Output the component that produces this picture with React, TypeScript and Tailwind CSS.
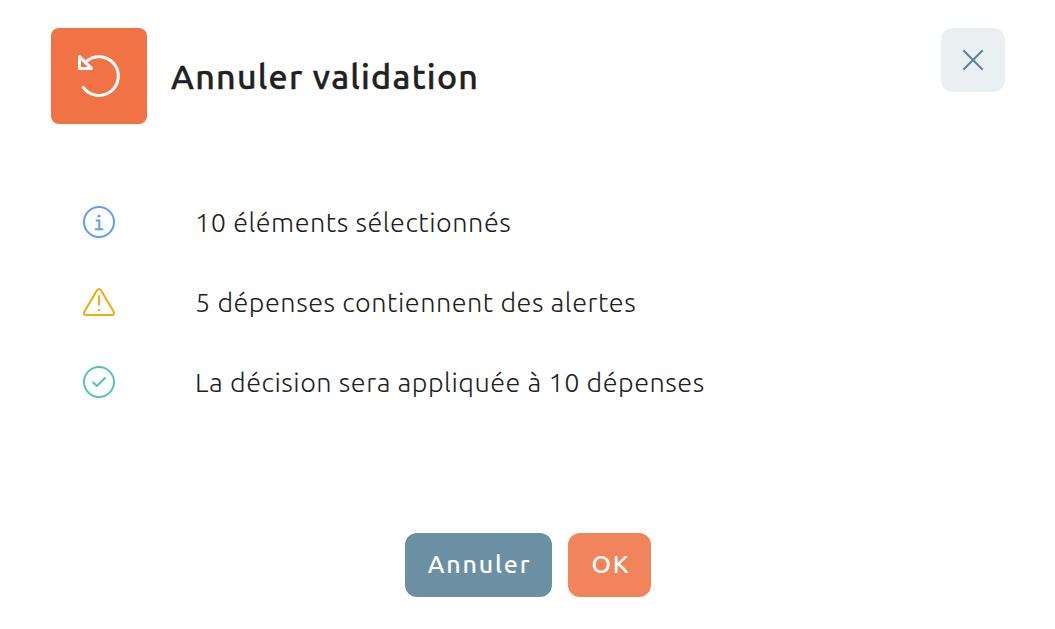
import React from "react";

function UndoIcon() {
  return (
    <svg width="96" height="96" viewBox="0 0 96 96" fill="none" stroke="#fff" strokeWidth="3" strokeLinecap="round" strokeLinejoin="round">
      <path d="M32.2 59.4A19.4 19.4 0 1 0 35.2 33.4" />
      <path d="M28.5 28.6V40.4H40.3Z" />
    </svg>
  );
}

function InfoIcon() {
  return (
    <svg width="32" height="32" viewBox="0 0 32 32" fill="none" stroke="#5b9cff" strokeWidth="2">
      <circle cx="16" cy="16" r="15" />
      <path d="M12.7 14.5H16.3V23M12 23.2H20.3" />
      <circle cx="16" cy="10.2" r="1.4" fill="#5b9cff" stroke="none" />
    </svg>
  );
}

function WarningIcon() {
  return (
    <svg width="32" height="32" viewBox="0 0 32 32" fill="none" stroke="#f2aa0c" strokeWidth="2" strokeLinecap="round" strokeLinejoin="round">
      <path d="M14.2 4.1Q16 1.8 17.8 4.1L30.7 25.8Q31.8 28.9 28.8 29H3.2Q.2 28.9 1.3 25.8Z" />
      <path d="M16 10V18.8" />
      <circle cx="16" cy="24" r="1.2" fill="#f2aa0c" stroke="none" />
    </svg>
  );
}

function CheckIcon() {
  return (
    <svg width="32" height="32" viewBox="0 0 32 32" fill="none" stroke="#52c2bd" strokeWidth="2" strokeLinecap="round" strokeLinejoin="round">
      <circle cx="16" cy="16" r="15" />
      <path d="M10.2 16.5L13.9 20L22 12" />
    </svg>
  );
}

const rows = [
  { icon: <InfoIcon />, text: "10 éléments sélectionnés" },
  { icon: <WarningIcon />, text: "5 dépenses contiennent des alertes" },
  { icon: <CheckIcon />, text: "La décision sera appliquée à 10 dépenses" },
];

export default function App() {
  return (
    <main className="flex h-[629px] w-[1055px] flex-col overflow-hidden bg-white pt-7 font-['Ubuntu','Noto_Sans',sans-serif] text-[#212121]">
      <header className="flex h-24 items-start pr-[50px] pl-[51px]">
        <div className="size-24 shrink-0 rounded-lg bg-[#f17345]">
          <UndoIcon />
        </div>
        <h1 className="ml-6 flex h-24 items-center text-[34px] leading-10 font-medium tracking-[1.26px] whitespace-nowrap">
          <span className="[-webkit-text-stroke:0.4px_#212121]">Annuler validation</span>
        </h1>
        <button aria-label="Fermer" className="ml-auto flex size-16 items-center justify-center rounded-xl bg-[#eaeff2]">
          <svg width="22" height="22" viewBox="0 0 22 22" fill="none" stroke="#5a8499" strokeWidth="2">
            <path d="M1.3 1.3L20.7 20.7M20.7 1.3L1.3 20.7" />
          </svg>
        </button>
      </header>
      <ul className="mt-[58px] flex flex-col pl-[83px]">
        {rows.map((r) => (
          <li key={r.text} className="flex h-20 items-center">
            {r.icon}
            <span className="ml-20 text-[27px] leading-10 font-light tracking-[0.52px] whitespace-nowrap">{r.text}</span>
          </li>
        ))}
      </ul>
      <footer className="mt-[111px] flex gap-4 pl-[405px] text-[25px] leading-9 font-medium text-white">
        <button className="flex h-16 w-[147px] items-center justify-center rounded-xl bg-[#6b90a3] pb-0.5 pl-0.5 tracking-[1.8px]">
          <span>Annuler</span>
        </button>
        <button className="flex h-16 w-[83px] items-center justify-center rounded-xl bg-[#f2845b] pb-0.5 pl-[3px] tracking-[1.8px]">
          <span>OK</span>
        </button>
      </footer>
    </main>
  );
}
